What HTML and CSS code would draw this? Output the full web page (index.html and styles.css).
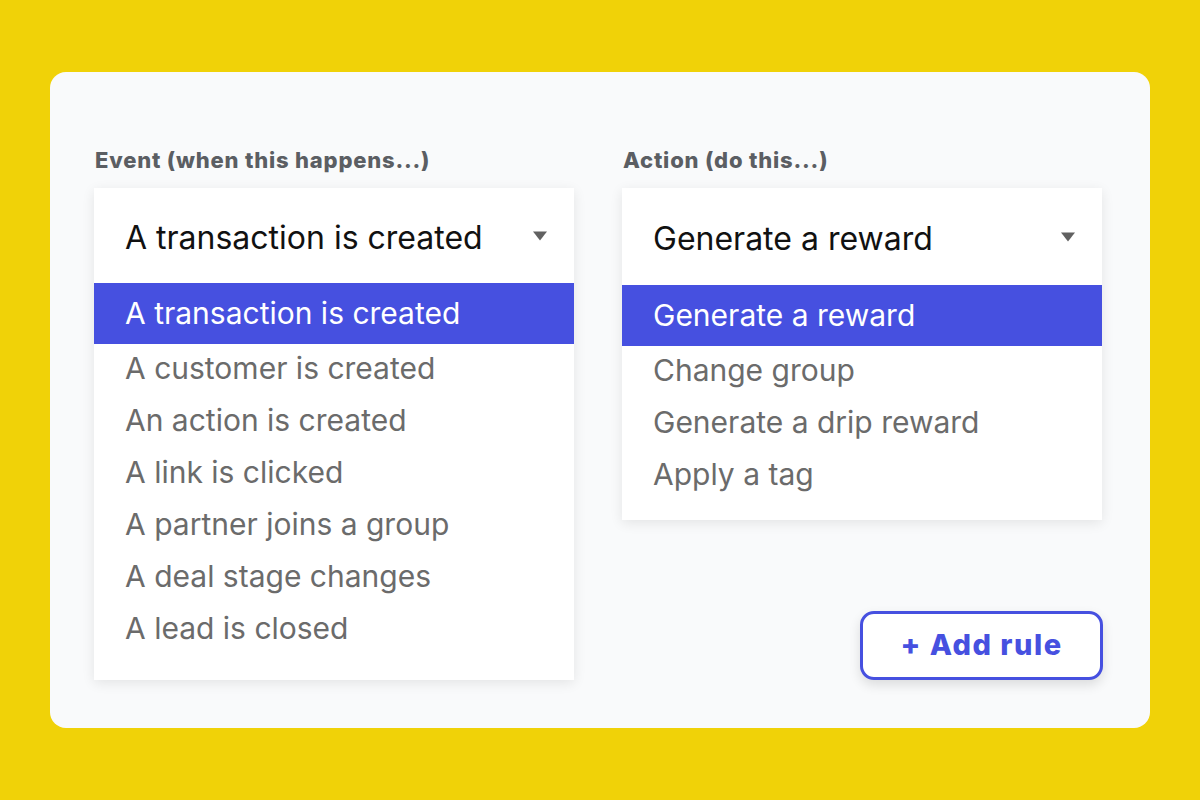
FILE: index.html
```html
<!DOCTYPE html>
<html lang="en">
<head>
<meta charset="utf-8">
<title>Rules</title>
<link rel="stylesheet" href="styles.css">
</head>
<body>
<main class="card">
  <div class="columns">
    <section class="field">
      <div class="label">Event (when this happens...)</div>
      <div class="dropdown">
        <div class="select">
          <span>A transaction is created</span>
          <svg class="caret" width="16" height="10" viewBox="0 0 16 10"><path d="M1 0.5 H15 L8 9.5 Z" fill="#616161"/></svg>
        </div>
        <ul class="options">
          <li class="active">A transaction is created</li>
          <li>A customer is created</li>
          <li>An action is created</li>
          <li>A link is clicked</li>
          <li>A partner joins a group</li>
          <li>A deal stage changes</li>
          <li>A lead is closed</li>
        </ul>
      </div>
    </section>
    <section class="field field-right">
      <div class="label">Action (do this...)</div>
      <div class="dropdown dropdown-short">
        <div class="select select-tall">
          <span>Generate a reward</span>
          <svg class="caret" width="16" height="10" viewBox="0 0 16 10"><path d="M1 0.5 H15 L8 9.5 Z" fill="#616161"/></svg>
        </div>
        <ul class="options">
          <li class="active">Generate a reward</li>
          <li>Change group</li>
          <li>Generate a drip reward</li>
          <li>Apply a tag</li>
        </ul>
      </div>
      <div class="actions">
        <button class="add-btn">+ Add rule</button>
      </div>
    </section>
  </div>
</main>
</body>
</html>
```

FILE: styles.css
```css
* { box-sizing: border-box; }
html, body { margin: 0; padding: 0; }
body {
  width: 1200px;
  height: 800px;
  background: #f0d208;
  font-family: Inter, "Noto Sans", sans-serif;
  padding: 72px 50px;
}
.card {
  width: 1100px;
  height: 656px;
  background: #f9fafb;
  border-radius: 16px;
  padding: 72px 48px 0 44px;
}
.columns {
  display: flex;
  gap: 48px;
}
.field {
  width: 480px;
  display: flex;
  flex-direction: column;
}
.label {
  font-size: 22px;
  font-weight: 800;
  letter-spacing: 0.8px;
  color: #5b5e63;
  line-height: 32px;
  padding-left: 1px;
  margin-bottom: 12px;
}
.dropdown {
  background: #ffffff;
  box-shadow: 0 3px 12px rgba(0, 0, 0, 0.09);
  padding-bottom: 24px;
}
.dropdown-short { padding-bottom: 18px; }
.select {
  height: 95px;
  display: flex;
  align-items: center;
  justify-content: space-between;
  padding: 4px 26px 0 31px;
  font-size: 32px;
  color: #111111;
}
.select-tall { height: 97px; }
.caret { display: block; margin-top: -4px; }
.options {
  list-style: none;
  margin: 0;
  padding: 0;
}
.options li {
  height: 52px;
  line-height: 48px;
  padding-left: 31px;
  font-size: 30px;
  color: #6b6b6b;
}
.options li.active {
  height: 61px;
  line-height: 61px;
  background: #4650e0;
  color: #ffffff;
}
.actions {
  display: flex;
  justify-content: flex-end;
  margin-top: 91px;
  margin-right: -1px;
}
.add-btn {
  width: 243px;
  height: 69px;
  border: 3px solid #4650e0;
  border-radius: 14px;
  background: #ffffff;
  color: #4650e0;
  font-family: Inter, "Noto Sans", sans-serif;
  font-size: 29px;
  font-weight: 800;
  letter-spacing: 1.5px;
  box-shadow: 0 5px 12px rgba(0, 0, 0, 0.12);
  padding: 0 0 2px 0;
}
```
